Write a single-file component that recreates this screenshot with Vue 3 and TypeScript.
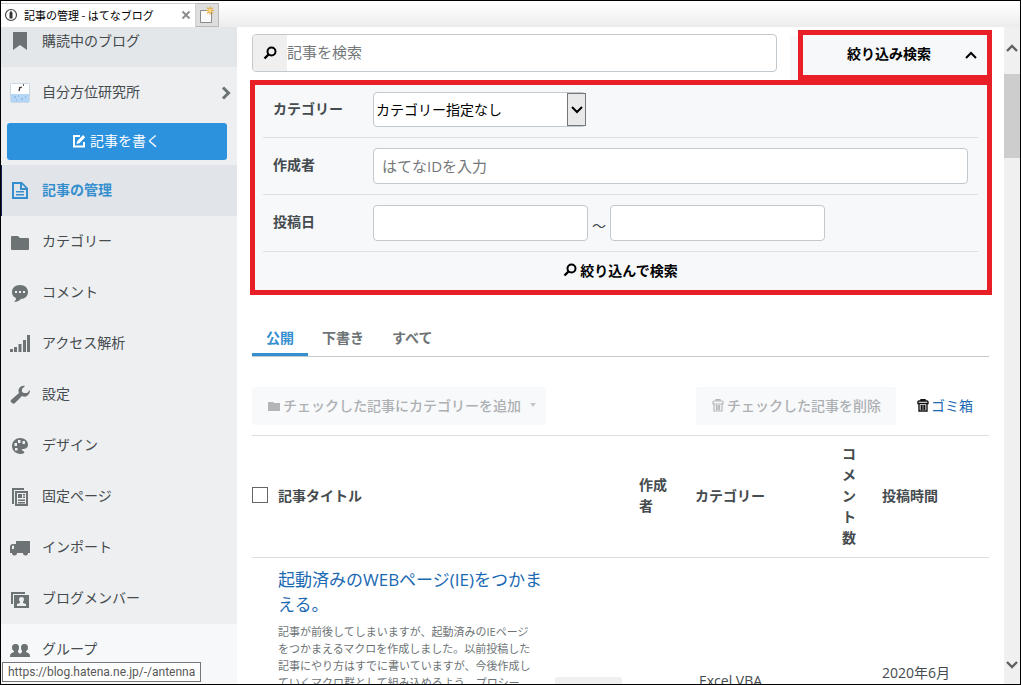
<script setup lang="ts">
import { ref } from 'vue'

interface NavItem {
  label: string
  icon: string
}

const navItems: NavItem[] = [
  { label: '記事の管理', icon: 'doc' },
  { label: 'カテゴリー', icon: 'folder' },
  { label: 'コメント', icon: 'comment' },
  { label: 'アクセス解析', icon: 'bars' },
  { label: '設定', icon: 'wrench' },
  { label: 'デザイン', icon: 'palette' },
  { label: '固定ページ', icon: 'pages' },
  { label: 'インポート', icon: 'truck' },
  { label: 'ブログメンバー', icon: 'member' },
  { label: 'グループ', icon: 'group' },
]

const iconPaths: Record<string, string> = {
  doc: 'M2 1h10l6 6v11H2zM4 3v13h12V9h-6V3zM12 3.500v3.500h3.500zM6 10h8v1.500H6zM6 13h8v1.500H6z',
  folder: 'M1 5q0-1 1-1h6l2 2h8q1 0 1 1v10q0 1-1 1H2q-1 0-1-1z',
  comment: 'M10 2c5 0 8 3 8 7s-3 7-7 7c-2 2-4 3-7 3 1-1 2-2 2-4-3-1-4-3-4-6 0-4 3-7 8-7zM5 8v2h2V8zM9 8v2h2V8zM13 8v2h2V8z',
  bars: 'M0 15h3v3H0zM4 13h3v5H4zM8.500 10h3v8h-3zM13 6h3v12h-3zM17 1h3v17h-3z',
  wrench: 'M15 1l-3 3v3l2 1h3l3-3c0 5-4 8-8 6l-7 7c-1 1-2 1-3 0l-1-1c-1-1 0-2 0-2l8-7C7 4 11 0 15 1z',
  palette: 'M10 2c5 0 8 3 8 7 0 3-3 4-5 4-2 0-1 1 0 2 2 0 2 3-2 3-6 0-9-4-9-8 0-5 4-8 8-8zM8 4v3h2.500V4zM12.500 5v3H15V5zM4.500 7v3H7V7zM5 12v2.500h2.500V12z',
  pages: 'M2 1h12v2H4v14H2zM5 4h13v15H5zM7 6v11h9V6zM8 7h4v4H8zM13 7h2v1.500h-2zM13 9.500h2V11h-2zM8 12.500h7V14H8zM8 15h7v1.500H8z',
  truck: 'M6 3h14v12h-2a2.500 2.500 0 0 1-5 0H7a2.500 2.500 0 0 1-5 0H0V9q0-3 3-3h3zM2 8v3h2V7.500z',
  member: 'M1 3h14v2H3v10H1zM4 6h15v13H4zM7 17h9v-2l-3-1v-1q1-1 1-3 0-2-2.500-2T9 10q0 2 1 3v1l-3 1z',
  group: 'M6 4c2 0 3 1 3 4 0 1-1 3-1 3v1l2 2 2-2v-1c0 0-1-2-1-3 0-3 1-4 3-4 3 0 4 1 4 4 0 1-1 3-2 3v1q4 1 4 4v1H0v-1q0-3 4-4v-1c-1 0-2-2-2-3 0-3 1-4 4-4z',
}

const headings: string[] = ['作成者', 'カテゴリー', 'コメント数', '投稿時間']

const tabs: string[] = ['公開', '下書き', 'すべて']
const activeTab = ref<string>('公開')
const keyword = ref<string>('')
const author = ref<string>('')
const dateFrom = ref<string>('')
const dateTo = ref<string>('')
const allChecked = ref<boolean>(false)
</script>

<template>
  <div class="window">
    <header class="tabstrip">
      <div class="browser-tab">
        <svg class="site-icon" viewBox="0 0 14 14" aria-hidden="true">
          <circle cx="7" cy="7" r="5.500" fill="#fff" stroke="#444" stroke-width="1.200" />
          <path d="M7 2.500l1.500 2.500v5.500h-3V5z" fill="#333" />
        </svg>
        <span class="browser-title">記事の管理 - はてなブログ</span>
        <button class="close-tab" type="button" aria-label="タブを閉じる">
          <svg viewBox="0 0 10 10"><path d="M1.500 1.500l7 7M8.500 1.500l-7 7" stroke="#8b8b8b" stroke-width="1.800" /></svg>
        </button>
      </div>
      <button class="new-tab" type="button" aria-label="新しいタブ">
        <svg viewBox="0 0 18 18">
          <path d="M2.500 4.500h11v12h-11z" fill="#fafafa" stroke="#8a8a8a" />
          <path d="M12 0.500v8M8 4.500h8M9.200 1.700l5.600 5.600M14.800 1.700L9.200 7.300" stroke="#e2a63b" stroke-width="1.200" />
          <circle cx="12" cy="4.500" r="1.600" fill="#ffe08a" />
        </svg>
      </button>
      <div class="strip-rest"></div>
    </header>

    <div class="body">
      <nav class="sidebar">
        <a class="nav-item subscribed" href="#">
          <svg class="icon" viewBox="0 0 20 20" aria-hidden="true"><path d="M3 1h14v18l-7-5-7 5z" /></svg>
          購読中のブログ
        </a>
        <a class="nav-item blog" href="#">
          <svg class="icon" viewBox="0 0 20 20" aria-hidden="true">
            <rect x="0.500" y="0.500" width="19" height="19" rx="1" fill="#fff" stroke="#c9d8e4" />
            <path d="M1 11h18v8H1z" fill="#b5d7f5" />
            <path d="M4 14h2M8 13h1M11 16h2M15 14h1M6 17h1" stroke="#6ea6d6" />
            <path d="M9 8l1-4M9 5l3-1M13 2h1" stroke="#333" stroke-width="1.300" />
          </svg>
          <span class="grow">自分方位研究所</span>
          <svg class="chevron" viewBox="0 0 10 14" aria-hidden="true"><path d="M2 1.500L7.500 7 2 12.500" fill="none" stroke="#6d7375" stroke-width="3" /></svg>
        </a>
        <button class="write" type="button">
          <svg viewBox="0 0 14 14" aria-hidden="true">
            <path d="M8 2H2v10.500h10V8" fill="none" stroke="#fff" stroke-width="2" />
            <path d="M4.500 10l.8-3L11 1l2.200 2.200-5.800 6z" fill="#fff" />
          </svg>
          記事を書く
        </button>
        <a
          v-for="(item, index) in navItems"
          :key="item.label"
          class="nav-item"
          :class="{ current: index === 0, light: index === navItems.length - 1 }"
          href="#"
        >
          <svg class="icon" viewBox="0 0 20 20" aria-hidden="true"><path fill-rule="evenodd" :d="iconPaths[item.icon]" /></svg>
          {{ item.label }}
        </a>
        <div class="sidebar-rest"></div>
      </nav>

      <main class="main">
        <div class="search-row">
          <div class="search-box">
            <button class="search-go" type="button" aria-label="検索">
              <svg class="lens" viewBox="0 0 14 14"><circle cx="8.500" cy="5.500" r="4" fill="none" stroke="#000" stroke-width="2" /><path d="M5.500 8.500L1.500 12.500" stroke="#000" stroke-width="2.400" /></svg>
            </button>
            <input v-model="keyword" type="text" placeholder="記事を検索" aria-label="記事を検索" />
          </div>
          <div class="toggle-wrap">
            <button class="toggle" type="button" aria-expanded="true">
              <span class="grow">絞り込み検索</span>
              <svg viewBox="0 0 12 8" aria-hidden="true"><path d="M1 7l5-5 5 5" fill="none" stroke="#000" stroke-width="2" /></svg>
            </button>
          </div>
        </div>

        <form class="filter" @submit.prevent>
          <div class="filter-row first">
            <label for="category">カテゴリー</label>
            <div class="select-wrap">
              <select id="category">
                <option>カテゴリー指定なし</option>
              </select>
              <span class="select-arrow">
                <svg viewBox="0 0 12 8" aria-hidden="true"><path d="M1 1l5 5 5-5" fill="none" stroke="#000" stroke-width="2" /></svg>
              </span>
            </div>
          </div>
          <div class="filter-row">
            <label for="author">作成者</label>
            <input id="author" v-model="author" class="field grow" type="text" placeholder="はてなIDを入力" />
          </div>
          <div class="filter-row">
            <label for="date-from">投稿日</label>
            <input id="date-from" v-model="dateFrom" class="field date" type="text" />
            <span class="tilde">～</span>
            <input v-model="dateTo" class="field date" type="text" aria-label="投稿日の終わり" />
          </div>
          <button class="filter-go" type="submit">
            <svg class="lens" viewBox="0 0 14 14" aria-hidden="true"><circle cx="8.500" cy="5.500" r="4" fill="none" stroke="#000" stroke-width="2" /><path d="M5.500 8.500L1.500 12.500" stroke="#000" stroke-width="2.400" /></svg>
            絞り込んで検索
          </button>
        </form>

        <section class="entries">
          <div class="tabs">
            <button
              v-for="tab in tabs"
              :key="tab"
              type="button"
              :class="{ active: tab === activeTab }"
              @click="activeTab = tab"
            >{{ tab }}</button>
          </div>

          <div class="bulk">
            <button class="bulk-button add" type="button" disabled>
              <svg class="small" viewBox="0 0 14 14" aria-hidden="true"><path d="M1 4h5l1 1h6v8H1z" fill="#b3b5b7" /></svg>
              <span>チェックした記事にカテゴリーを追加</span>
              <svg class="caret" viewBox="0 0 6 4" aria-hidden="true"><path d="M0 0h6L3 4z" fill="#c4c6c8" /></svg>
            </button>
            <button class="bulk-button remove" type="button" disabled>
              <svg class="small" viewBox="0 0 14 14" aria-hidden="true"><path d="M5 3V1.700h4V3M2 6V4q0-1 1-1h8q1 0 1 1v2zM3 6v7h8V6M5.500 7v5M7 7v5M8.500 7v5" fill="none" stroke="#b3b5b7" stroke-width="1.200" /></svg>
              <span>チェックした記事を削除</span>
            </button>
            <a class="trash" href="#">
              <svg class="small" viewBox="0 0 14 14" aria-hidden="true"><path d="M5 3V1.700h4V3M2 5.500V4q0-1 1-1h8q1 0 1 1v1.500zM3 6v7h8V6M5.300 7v5M7 7v5M8.700 7v5" fill="none" stroke="#111" stroke-width="1.400" /></svg>
              <span>ゴミ箱</span>
            </a>
          </div>

          <table>
            <colgroup>
              <col class="c-check" />
              <col class="c-title" />
              <col />
              <col class="c-author" />
              <col class="c-category" />
              <col class="c-comment" />
              <col class="c-date" />
            </colgroup>
            <thead>
              <tr>
                <th class="check"><input v-model="allChecked" type="checkbox" aria-label="すべて選択" /></th>
                <th colspan="2">記事タイトル</th>
                <th v-for="heading in headings" :key="heading" class="cell">{{ heading }}</th>
              </tr>
            </thead>
            <tbody>
              <tr>
                <td></td>
                <td class="entry">
                  <a href="#">起動済みのWEBページ(IE)をつかまえる。</a>
                  <p>記事が前後してしまいますが、起動済みのIEページをつかまえるマクロを作成しました。以前投稿した記事にやり方はすでに書いていますが、今後作成していくマクロ群として組み込めるよう、プロシー</p>
                </td>
                <td class="edit"><button type="button" aria-label="編集"></button></td>
                <td></td>
                <td class="category">Excel VBA</td>
                <td></td>
                <td class="cell date-cell">2020年6月</td>
              </tr>
            </tbody>
          </table>
        </section>
      </main>

      <div class="scrollbar">
        <svg viewBox="0 0 12 8" aria-hidden="true"><path d="M1 7l5-5 5 5" fill="none" stroke="#606060" stroke-width="2.400" /></svg>
        <div class="thumb"></div>
        <svg viewBox="0 0 12 8" aria-hidden="true"><path d="M1 1l5 5 5-5" fill="none" stroke="#606060" stroke-width="2.400" /></svg>
      </div>
    </div>

    <div class="status">https://blog.hatena.ne.jp/-/antenna</div>
  </div>
</template>

<style>
body {
  margin: 0;
}
</style>

<style scoped>
* {
  box-sizing: border-box;
}

.window {
  position: relative;
  display: flex;
  flex-direction: column;
  height: 100vh;
  overflow: hidden;
  border: 1px solid #000;
  background: #fff;
  color: #454b4e;
  font: 14px/21px "Open Sans", "Noto Sans CJK JP", sans-serif;
}

button,
input,
select {
  margin: 0;
  padding: 0;
  border: 0;
  background: none;
  color: inherit;
  font: inherit;
}

a {
  color: #1b69b3;
  text-decoration: none;
}

svg {
  display: block;
  flex: none;
}

.grow {
  flex: 1;
  min-width: 0;
}

.tabstrip {
  display: flex;
  flex: none;
  height: 26px;
  padding-top: 2px;
}

.browser-tab {
  display: flex;
  align-items: center;
  width: 195px;
  padding: 0 4px 2px 3px;
  border: 1px solid #cfcfcf;
  border-width: 1px 1px 0 0;
  background: #fff;
  color: #000;
}

.site-icon {
  width: 14px;
  height: 14px;
}

.browser-title {
  flex: 1;
  padding-left: 6px;
  font: 11px/20px "Noto Sans CJK JP", sans-serif;
  white-space: nowrap;
}

.close-tab svg {
  width: 10px;
  height: 10px;
}

.new-tab {
  display: grid;
  place-items: center;
  width: 23px;
  border: 1px solid #b9b9b9;
  border-left: 0;
  background: #dedede;
}

.new-tab svg {
  width: 18px;
  height: 18px;
}

.strip-rest {
  flex: 1;
  background: linear-gradient(#fff, #ececec);
}

.body {
  display: flex;
  flex: 1;
  min-height: 0;
}

.sidebar {
  display: flex;
  flex: none;
  flex-direction: column;
  width: 236px;
  overflow: hidden;
  background: #edeff1;
}

.nav-item {
  display: flex;
  flex: none;
  align-items: center;
  height: 51px;
  padding: 0 6px 2px 9px;
  color: #454b4e;
}

.icon {
  width: 20px;
  height: 20px;
  margin: 2px 12px 0 0;
  fill: #6d7375;
}

.subscribed {
  height: 40px;
  padding-bottom: 14px;
  background: #e3e7ea;
}

.chevron {
  width: 10px;
  height: 14px;
  margin-top: 2px;
}

.write {
  display: flex;
  flex: none;
  align-items: center;
  justify-content: center;
  gap: 4px;
  height: 37px;
  margin: 5px 10px 5px 6px;
  padding: 0 2px 2px 0;
  border-radius: 3px;
  background: #2c92de;
  color: #fff;
}

.write svg {
  width: 14px;
  height: 14px;
}

.current {
  background: #e1e5ea;
  box-shadow: inset 1px 0 #14295a;
  color: #358fce;
  font-weight: 700;
}

.current .icon {
  fill: #358fce;
}

.light,
.sidebar-rest {
  background: #f6f8fa;
}

.sidebar-rest {
  flex: 1;
}

.main {
  flex: 1;
  min-width: 0;
  padding: 3px 12px 0 13px;
  overflow: hidden;
}

.search-row {
  display: flex;
  justify-content: space-between;
  gap: 13px;
  padding-left: 2px;
}

.search-box {
  display: flex;
  flex: 1;
  height: 38px;
  margin-top: 4px;
  border: 1px solid #c2c9ce;
  border-radius: 4px;
  overflow: hidden;
}

.search-box input {
  flex: 1;
  min-width: 0;
  padding-bottom: 2px;
  font-size: 15px;
}

.search-go {
  display: grid;
  place-items: center;
  width: 34px;
  background: #efefef;
}

.lens {
  width: 14px;
  height: 14px;
}

input::placeholder {
  color: #737779;
  opacity: 1;
}

.toggle-wrap {
  display: flex;
  height: 50px;
  padding-left: 8px;
  background: linear-gradient(#fff 6px, #f6f8fa 6px);
}

.toggle {
  display: flex;
  align-items: center;
  width: 194px;
  padding: 0 10px 4px;
  border: 5px solid #e81f27;
  background: #f6f8fa;
  color: #000;
  font-weight: 700;
}

.toggle svg {
  width: 12px;
  height: 8px;
  margin-top: 4px;
}

.filter {
  padding: 0 9px 0 8px;
  border: 5px solid #e81f27;
  background: #f6f8fa;
}

.filter-row {
  display: flex;
  align-items: center;
  padding: 10px;
  border-bottom: 1px solid #dce1e5;
}

.first {
  padding-top: 7px;
}

.filter-row label {
  flex: none;
  width: 100px;
  padding-bottom: 3px;
  font-weight: 700;
}

.field {
  height: 36px;
  padding: 0 8px;
  border: 1px solid #c2c9ce;
  border-radius: 4px;
  background: #fff;
  font-size: 15px;
}

.date {
  width: 215px;
}

.tilde {
  width: 22px;
  padding-top: 4px;
  text-align: center;
}

.select-wrap {
  position: relative;
  width: 213px;
}

select {
  display: block;
  width: 100%;
  height: 35px;
  padding: 0 22px 0 2px;
  border: 1px solid #c2c9ce;
  border-radius: 4px;
  appearance: none;
  background: #fff;
  color: #000;
}

.select-arrow {
  position: absolute;
  top: 1px;
  right: 0;
  bottom: 1px;
  display: grid;
  place-items: center;
  width: 19px;
  border: 1px solid #767676;
  background: #e9e9e9;
  pointer-events: none;
}

.select-arrow svg {
  width: 12px;
  height: 8px;
}

.filter-go {
  display: flex;
  align-items: center;
  justify-content: center;
  gap: 3px;
  width: 100%;
  height: 38px;
  padding-bottom: 2px;
  color: #000;
  font-weight: 700;
}

.entries {
  padding: 25px 3px 0 2px;
}

.tabs {
  display: flex;
  border-bottom: 1px solid #c2c9ce;
}

.tabs button {
  height: 36px;
  padding: 2px 14px 0;
  border-bottom: 3px solid transparent;
  color: #6d7375;
  font-weight: 700;
}

.tabs .active {
  border-color: #358fce;
  color: #358fce;
}

.bulk {
  display: flex;
  align-items: center;
  padding: 30px 16px 10px 0;
  border-bottom: 1px solid #dcdfe1;
}

.bulk-button {
  display: flex;
  align-items: center;
  height: 38px;
  gap: 2px;
  padding: 0 15px 2px;
  border-radius: 3px;
  background: #f8f9fb;
  color: #adb0b2;
  font-weight: 500;
}

.add {
  padding-right: 10px;
}

.remove {
  margin-left: auto;
}

.small {
  width: 14px;
  height: 14px;
}

.caret {
  width: 6px;
  height: 4px;
  margin-left: 7px;
}

.trash {
  display: flex;
  align-items: center;
  gap: 1px;
  margin-left: 20px;
  padding-bottom: 2px;
}

table {
  width: 100%;
  table-layout: fixed;
  border-collapse: collapse;
}

.c-check {
  width: 26px;
}

.c-title {
  width: 269px;
}

.c-author {
  width: 56px;
}

.c-category {
  width: 147px;
}

.c-comment {
  width: 40px;
}

.c-date {
  width: 115px;
}

th,
td {
  padding: 0;
  text-align: left;
  vertical-align: top;
}

th {
  height: 121px;
  padding-bottom: 2px;
  border-bottom: 1px solid #dcdfe1;
  vertical-align: middle;
  font-weight: 700;
}

.cell {
  padding-right: 8px;
  padding-left: 8px;
}

.check input {
  display: block;
  width: 16px;
  height: 16px;
  border: 1px solid #666;
  appearance: none;
  background: #fff;
}

.check input:checked {
  background: #358fce;
}

.entry {
  padding: 9px 4px 0 0;
}

.entry a {
  display: block;
  font-size: 17px;
  line-height: 25px;
}

.entry p {
  margin: 6px 4px 0 0;
  color: #6d7375;
  font-size: 11px;
  line-height: 17px;
}

.edit {
  padding: 119px 9px 0 8px;
}

.edit button {
  display: block;
  width: 100%;
  height: 30px;
  border-radius: 2px;
  background: #eff0f2;
}

.category {
  padding: 112px 8px 0 12px;
}

.date-cell {
  padding-top: 104px;
}

.scrollbar {
  display: flex;
  flex: none;
  flex-direction: column;
  align-items: center;
  width: 16px;
  padding: 17px 0 15px;
  background: #f0f0f0;
}

.scrollbar svg {
  width: 12px;
  height: 8px;
}

.thumb {
  width: 100%;
  height: 84px;
  margin: 22px 0 auto;
  background: #cdcdcd;
}

.status {
  position: absolute;
  bottom: 2px;
  left: 1px;
  padding: 0 5px;
  border: 1px solid #767676;
  background: #fff;
  color: #575757;
  font: 12px/18px Roboto, sans-serif;
}
</style>
